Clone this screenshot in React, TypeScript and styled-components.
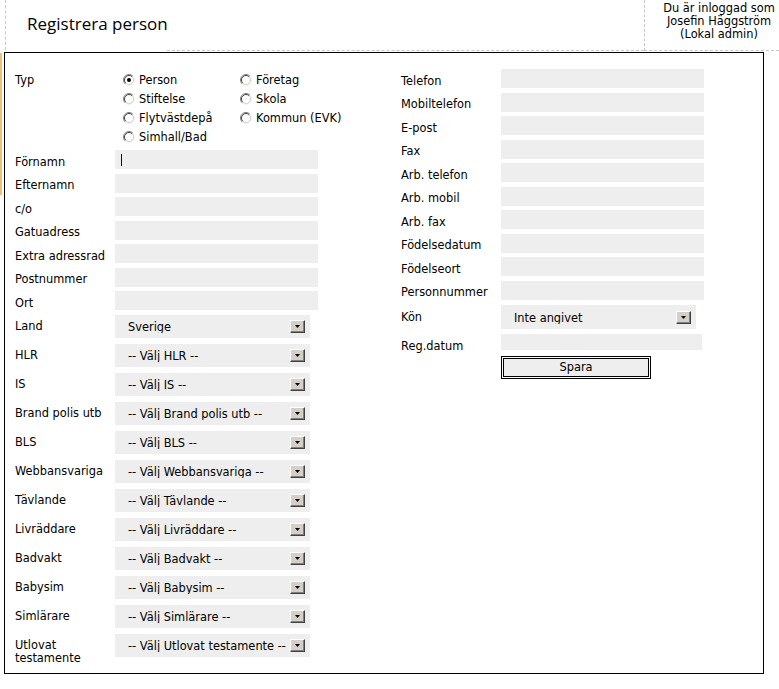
import React from "react";
import styled, { createGlobalStyle } from "styled-components";

const GlobalStyle = createGlobalStyle`
  html, body { margin: 0; padding: 0; background: #fff; }
  body {
    font-family: "DejaVu Sans", Verdana, sans-serif;
    font-size: 11.4px;
    color: #000;
  }
`;

const Page = styled.div`
  width: 779px;
`;

const Header = styled.header`
  display: flex;
  height: 51px;
`;

const TitleCell = styled.div`
  width: 162px;
  height: 50px;
  margin-left: 5px;
  box-sizing: border-box;
  border-left: 1px dashed #c8c8c8;
  padding: 12px 0 0 21px;
`;

const Title = styled.h1`
  margin: 0;
  font-family: "Open Sans", "Liberation Sans", sans-serif;
  font-size: 17px;
  font-weight: 400;
  line-height: normal;
  white-space: nowrap;
  color: #000;
`;

const HeaderSpacer = styled.div`
  flex: 1;
  border-bottom: 1px dashed #c8c8c8;
`;

const UserCell = styled.div`
  width: 135px;
  box-sizing: border-box;
  border-left: 1px dashed #c8c8c8;
  border-bottom: 1px dashed #c8c8c8;
  padding: 1.5px 0 0 14px;
  text-align: center;
  line-height: 13px;
  white-space: nowrap;
`;

const Main = styled.div`
  display: flex;
  align-items: flex-start;
  margin-top: 1px;
`;

const SideStrip = styled.div`
  width: 2px;
  height: 142px;
  margin: 1px 2px 0 0;
  background: #f3c070;
`;

const FormBox = styled.form`
  width: 760px;
  height: 622px;
  box-sizing: border-box;
  border: 1px solid #000;
  display: flex;
  align-items: flex-start;
  padding: 16px 0 0 10px;
  margin: 0;
`;

const Column = styled.div<{ $offset: number; $pt: number }>`
  width: 303px;
  margin-left: ${(p) => p.$offset}px;
  padding-top: ${(p) => p.$pt}px;
  display: flex;
  flex-direction: column;
`;

const Row = styled.div<{ $h: number; $pt?: number }>`
  display: flex;
  align-items: flex-start;
  height: ${(p) => p.$h}px;
  padding-top: ${(p) => p.$pt ?? 0}px;
  box-sizing: border-box;
`;

const Label = styled.div<{ $pt: number }>`
  width: 100px;
  flex-shrink: 0;
  padding-top: ${(p) => p.$pt}px;
  line-height: 13px;
`;

const Field = styled.div<{ $w: number; $h: number }>`
  width: ${(p) => p.$w}px;
  height: ${(p) => p.$h}px;
  box-sizing: border-box;
  background: #eeeeee;
  display: flex;
  align-items: center;
  padding-left: 6px;
`;

const Caret = styled.span`
  width: 1px;
  height: 12px;
  background: #000;
`;

const SelectBox = styled.div<{ $w: number; $h: number }>`
  width: ${(p) => p.$w}px;
  height: ${(p) => p.$h}px;
  box-sizing: border-box;
  background: #eeeeee;
  display: flex;
  align-items: center;
  padding: 0 5px 0 13px;
`;

const SelectValue = styled.span`
  flex: 1;
  min-width: 0;
  height: 12px;
  margin-top: 1px;
  line-height: 13px;
  overflow: hidden;
  white-space: nowrap;
  color: #000;
`;

const ArrowBtn = styled.span`
  width: 15px;
  height: 13px;
  flex-shrink: 0;
  box-sizing: border-box;
  background: #d4d0c8;
  border: 1px solid;
  border-color: #ffffff #404040 #404040 #ffffff;
  box-shadow: inset -1px -1px 0 #808080;
  display: flex;
  align-items: center;
  justify-content: center;
  padding-top: 1px;
`;

const RadioGrid = styled.div`
  display: grid;
  grid-template-columns: 117px auto;
  grid-auto-rows: 19px;
  margin-left: 8px;
`;

const RadioItem = styled.label`
  display: flex;
  align-items: center;
  gap: 4px;
  white-space: nowrap;
`;

const SaveButton = styled.button`
  width: 150px;
  height: 23px;
  margin: 0 0 0 100px;
  padding: 0;
  box-sizing: border-box;
  border: 3px double #000;
  background: #eeeeee;
  background-clip: padding-box;
  font-family: "DejaVu Sans", Verdana, sans-serif;
  font-size: 11.4px;
  color: #000;
  line-height: 13px;
`;

const Radio = ({ checked }: { checked?: boolean }) => (
  <svg width="12" height="12" viewBox="0 0 12 12">
    <circle cx="6" cy="6" r="5.5" fill="#fff" />
    <path d="M2.1 9.9 A5.5 5.5 0 0 1 9.9 2.1" stroke="#808080" strokeWidth="1" fill="none" />
    <path d="M9.9 2.1 A5.5 5.5 0 0 1 2.1 9.9" stroke="#f0f0f0" strokeWidth="1" fill="none" />
    <path d="M2.8 9.2 A4.5 4.5 0 0 1 9.2 2.8" stroke="#404040" strokeWidth="1" fill="none" />
    <path d="M9.2 2.8 A4.5 4.5 0 0 1 2.8 9.2" stroke="#d4d0c8" strokeWidth="1" fill="none" />
    {checked && <circle cx="6" cy="6" r="2" fill="#000" />}
  </svg>
);

const Select = ({ value, w, h }: { value: string; w: number; h: number }) => (
  <SelectBox $w={w} $h={h}>
    <SelectValue>{value}</SelectValue>
    <ArrowBtn>
      <svg width="5" height="3" viewBox="0 0 5 3">
        <polygon points="0,0 5,0 2.5,3" fill="#000" />
      </svg>
    </ArrowBtn>
  </SelectBox>
);

const radios = [
  { label: "Person", checked: true },
  { label: "Företag" },
  { label: "Stiftelse" },
  { label: "Skola" },
  { label: "Flytvästdepå" },
  { label: "Kommun (EVK)" },
  { label: "Simhall/Bad" },
];

const leftText = ["Förnamn", "Efternamn", "c/o", "Gatuadress", "Extra adressrad", "Postnummer", "Ort"];

const leftSelects: { label: string; value: string }[] = [
  { label: "Land", value: "Sverige" },
  { label: "HLR", value: "-- Välj HLR --" },
  { label: "IS", value: "-- Välj IS --" },
  { label: "Brand polis utb", value: "-- Välj Brand polis utb --" },
  { label: "BLS", value: "-- Välj BLS --" },
  { label: "Webbansvariga", value: "-- Välj Webbansvariga --" },
  { label: "Tävlande", value: "-- Välj Tävlande --" },
  { label: "Livräddare", value: "-- Välj Livräddare --" },
  { label: "Badvakt", value: "-- Välj Badvakt --" },
  { label: "Babysim", value: "-- Välj Babysim --" },
  { label: "Simlärare", value: "-- Välj Simlärare --" },
  { label: "Utlovat testamente", value: "-- Välj Utlovat testamente --" },
];

const rightText = [
  "Telefon",
  "Mobiltelefon",
  "E-post",
  "Fax",
  "Arb. telefon",
  "Arb. mobil",
  "Arb. fax",
  "Födelsedatum",
  "Födelseort",
  "Personnummer",
];

export default function App() {
  return (
    <Page>
      <GlobalStyle />
      <Header>
        <TitleCell>
          <Title>Registrera person</Title>
        </TitleCell>
        <HeaderSpacer />
        <UserCell>
          Du är inloggad som
          <br />
          Josefin Häggström
          <br />
          (Lokal admin)
        </UserCell>
      </Header>
      <Main>
        <SideStrip />
        <FormBox onSubmit={(e) => e.preventDefault()}>
          <Column $offset={0} $pt={1}>
            <Row $h={80}>
              <Label $pt={4}>Typ</Label>
              <RadioGrid>
                {radios.map((r) => (
                  <RadioItem key={r.label}>
                    <Radio checked={r.checked} />
                    {r.label}
                  </RadioItem>
                ))}
              </RadioGrid>
            </Row>
            {leftText.map((l, i) => (
              <Row key={l} $h={23.5}>
                <Label $pt={5.5}>{l}</Label>
                <Field $w={203} $h={19}>{i === 0 && <Caret />}</Field>
              </Row>
            ))}
            {leftSelects.map((s) => (
              <Row key={s.label} $h={29}>
                <Label $pt={5}>{s.label}</Label>
                <Select value={s.value} w={195} h={23.5} />
              </Row>
            ))}
          </Column>
          <Column $offset={83} $pt={0}>
            {rightText.map((l) => (
              <Row key={l} $h={23.5}>
                <Label $pt={5.5}>{l}</Label>
                <Field $w={203} $h={19} />
              </Row>
            ))}
            <Row $h={30} $pt={1}>
              <Label $pt={6}>Kön</Label>
              <Select value="Inte angivet" w={195} h={24} />
            </Row>
            <Row $h={21.5}>
              <Label $pt={5.5}>Reg.datum</Label>
              <Field $w={201} $h={16} />
            </Row>
            <SaveButton type="submit">Spara</SaveButton>
          </Column>
        </FormBox>
      </Main>
    </Page>
  );
}
